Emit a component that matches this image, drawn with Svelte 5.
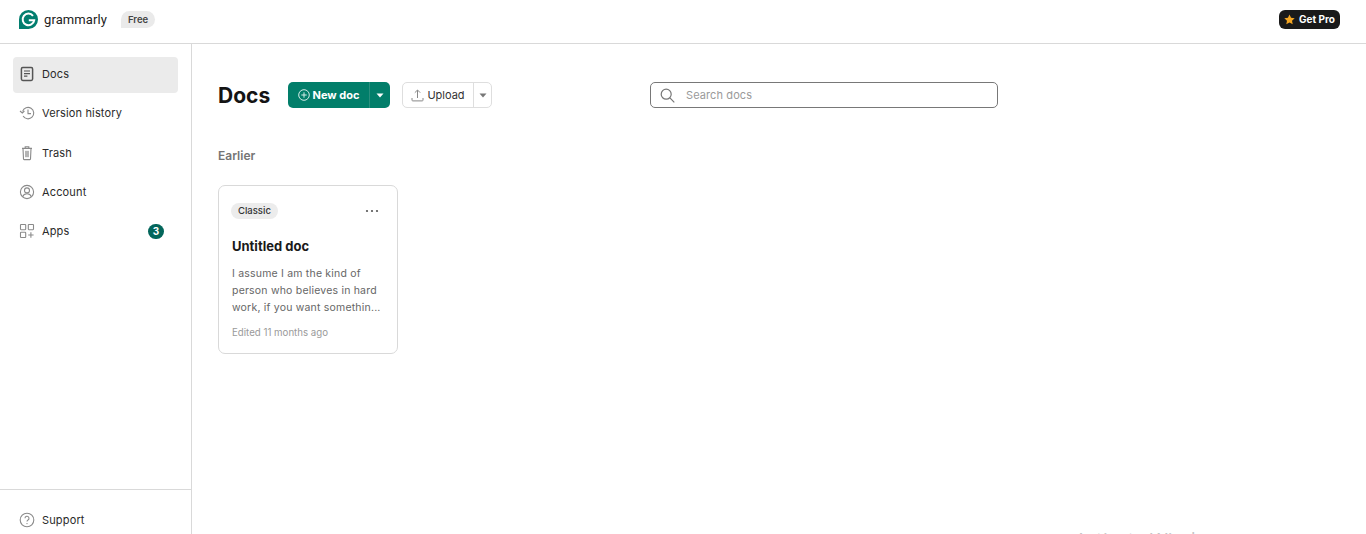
<script>
  const nav = [
    { id: 'docs', label: 'Docs', active: true },
    { id: 'history', label: 'Version history' },
    { id: 'trash', label: 'Trash' },
    { id: 'account', label: 'Account' },
    { id: 'apps', label: 'Apps', badge: 3 }
  ];
</script>

{#snippet caret()}
  <svg width="8" height="5" viewBox="0 0 8 5"><path d="M0.5 0.5h7L4 4.500z" fill="currentColor" /></svg>
{/snippet}

{#snippet navIcon(id)}
  <svg class="nav-icon" width="16" height="16" viewBox="0 0 16 16" fill="none" stroke="#8a8a8a" stroke-width="1.100">
    {#if id === 'docs'}
      <rect x="2.400" y="1.600" width="11.200" height="12.800" rx="1.400" stroke="#555" stroke-width="1.500" />
      <path d="M5 5h6M5 7.600h6M5 10.200h3.400" stroke="#555" stroke-width="1.200" />
    {:else if id === 'history'}
      <path d="M3.600 6.400a5.700 5.700 0 1 1 .5 4.600" />
      <path d="M1 6l2.300 2 2.100-2" />
      <path d="M9 4.400v4.200h3" />
    {:else if id === 'trash'}
      <path d="M3 3.400h10M6.200 3.200V1.800h3.600v1.400M4 3.600l.5 10.400c0 .4.300.6.600.6h5.800c.3 0 .6-.2.6-.6l.5-10.400" />
      <path d="M6 5.800h4v6.400H6z" fill="#b5b5b5" stroke="none" />
    {:else if id === 'account'}
      <circle cx="8" cy="8" r="6.600" />
      <circle cx="8" cy="6.400" r="2.500" />
      <path d="M3.600 12.800c.7-2 2.400-3 4.400-3s3.700 1 4.400 3" />
    {:else if id === 'apps'}
      <rect x="1.500" y="1.500" width="5.200" height="5.200" rx=".6" />
      <rect x="9.300" y="1.500" width="5.200" height="5.200" rx=".6" />
      <rect x="1.500" y="9.300" width="5.200" height="5.200" rx=".6" />
      <path d="M11.900 9.300v5.400M9.200 12h5.400" />
    {:else}
      <circle cx="8" cy="8" r="6.800" />
      <path d="M6 6.300a2 2 0 1 1 3 1.700c-.7.400-1 .8-1 1.600" />
      <circle cx="8" cy="11.600" r=".7" fill="#8a8a8a" stroke="none" />
    {/if}
  </svg>
{/snippet}

<div class="page">
  <header class="topbar">
    <div class="brand">
      <svg width="19" height="19" viewBox="0 0 19 19">
        <path d="M9.500 0a9.500 9.500 0 0 1 9.500 9.500A9.500 9.500 0 0 1 9.500 19H0V9.500A9.500 9.500 0 0 1 9.500 0z" fill="#027e6f" />
        <path d="M14 5.800a5.800 5.800 0 1 0 1.200 4.500H9.800" fill="none" stroke="#fff" stroke-width="2" />
      </svg>
      <span class="wordmark">grammarly</span>
      <span class="plan">Free</span>
    </div>
    <button class="get-pro">
      <svg width="11" height="11" viewBox="0 0 24 24"><path d="M12 1l3.400 7.300 7.900 1-5.800 5.400 1.500 7.900-7-3.900-7 3.900 1.500-7.900L.7 9.300l7.900-1z" fill="#f5a623" /></svg>
      Get Pro
    </button>
  </header>

  <div class="body">
    <aside class="sidebar">
      <nav>
        {#each nav as item}
          <div class="nav-item" class:active={item.active}>
            {@render navIcon(item.id)}
            <span>{item.label}</span>
            {#if item.badge}<span class="badge">{item.badge}</span>{/if}
          </div>
        {/each}
      </nav>
      <div class="support">
        <div class="nav-item">
          {@render navIcon('support')}
          <span>Support</span>
        </div>
      </div>
    </aside>

    <main class="content">
      <div class="toolbar">
        <h1>Docs</h1>
        <div class="split primary">
          <button class="main">
            <svg width="12" height="12" viewBox="0 0 12 12" fill="none" stroke="#d5ece8" stroke-width="1"><circle cx="6" cy="6" r="5.300" /><path d="M6 3.300v5.400M3.300 6h5.400" /></svg>
            New doc
          </button>
          <button class="arrow">{@render caret()}</button>
        </div>
        <div class="split secondary">
          <button class="main">
            <svg width="13" height="13" viewBox="0 0 13 13" fill="none" stroke="#888" stroke-width="1"><path d="M6.500 9V1.200M3.800 3.700l2.700-2.700 2.700 2.700M1 9v2.200c0 .4.300.7.700.7h9.600c.4 0 .7-.3.700-.7V9" /></svg>
            Upload
          </button>
          <button class="arrow">{@render caret()}</button>
        </div>
        <label class="search">
          <svg width="15" height="15" viewBox="0 0 15 15" fill="none" stroke="#777" stroke-width="1.200"><circle cx="6.200" cy="6.200" r="5" /><path d="M9.900 9.900l4.400 4.400" /></svg>
          <input type="text" placeholder="Search docs" />
        </label>
      </div>

      <h2>Earlier</h2>

      <article class="card">
        <div class="card-top">
          <span class="tag">Classic</span>
          <svg class="dots" width="14" height="4" viewBox="0 0 14 4" fill="#555"><circle cx="2" cy="2" r="1.100" /><circle cx="7" cy="2" r="1.100" /><circle cx="12" cy="2" r="1.100" /></svg>
        </div>
        <h3>Untitled doc</h3>
        <p class="preview">I assume I am the kind of person who believes in hard work, if you want somethin...</p>
        <p class="meta">Edited 11 months ago</p>
      </article>
    </main>
  </div>

  <div class="watermark">Activate Windows</div>
</div>

<style>
  :global(body) {
    margin: 0;
    background: #fff;
  }

  .page {
    position: relative;
    height: 534px;
    overflow: hidden;
    display: flex;
    flex-direction: column;
    font-family: Inter, "Liberation Sans", sans-serif;
    color: #1a1a1a;
  }

  button {
    font-family: inherit;
    border: none;
    background: none;
    padding: 0;
    cursor: pointer;
  }

  .topbar {
    height: 43px;
    flex: none;
    border-bottom: 1px solid #d9d9d9;
    display: flex;
    align-items: center;
    justify-content: space-between;
    padding: 0 26px 0 19px;
  }

  .brand {
    display: flex;
    align-items: center;
    margin-top: -4px;
  }

  .wordmark {
    margin-left: 6px;
    font-family: Roboto, sans-serif;
    font-size: 13px;
    letter-spacing: 0.1px;
    color: #222;
    width: 64px;
  }

  .plan {
    margin-left: 13px;
    height: 17px;
    line-height: 17px;
    padding: 0 7px;
    background: #eaeaea;
    border-radius: 9px 9px 9px 0;
    font-size: 9.500px;
    font-weight: 600;
    color: #444;
  }

  .get-pro {
    margin-top: -5px;
    height: 19px;
    width: 61px;
    border-radius: 6px;
    background: #1a1a1a;
    color: #fff;
    font-size: 10px;
    font-weight: 700;
    display: flex;
    align-items: center;
    justify-content: center;
    gap: 4px;
  }

  .body {
    flex: 1;
    display: flex;
    min-height: 0;
  }

  .sidebar {
    width: 192px;
    box-sizing: border-box;
    flex: none;
    border-right: 1px solid #d9d9d9;
    display: flex;
    flex-direction: column;
    justify-content: space-between;
  }

  nav {
    padding: 13px 13px 0;
    display: flex;
    flex-direction: column;
    gap: 3.250px;
  }

  nav .nav-item {
    padding-bottom: 2px;
  }

  .nav-item {
    height: 36px;
    box-sizing: border-box;
    border-radius: 4px;
    padding: 0 14px 0 6px;
    display: flex;
    align-items: center;
    gap: 7px;
    font-size: 11px;
    font-weight: 400;
    letter-spacing: 0.15px;
    color: #2a2a2a;
  }

  .nav-item.active {
    background: #ebebeb;
  }

  .nav-icon {
    flex: none;
  }

  .badge {
    margin-left: auto;
    width: 16px;
    height: 15px;
    border-radius: 8px;
    background: #03665b;
    color: #fff;
    font-size: 10px;
    font-weight: 700;
    display: flex;
    align-items: center;
    justify-content: center;
  }

  .support {
    border-top: 1px solid #d9d9d9;
    padding: 12px 13px 0;
    height: 32px;
  }

  .content {
    flex: 1;
    padding: 38px 0 0 26px;
  }

  .toolbar {
    display: flex;
    align-items: center;
    height: 26px;
  }

  h1 {
    margin: 0 18px 0 0;
    font-size: 21px;
    font-weight: 700;
    color: #141414;
    width: 52px;
  }

  .split {
    height: 26px;
    display: flex;
    border-radius: 5px;
    overflow: hidden;
    box-sizing: border-box;
  }

  .split .main,
  .split .arrow {
    height: 100%;
    display: flex;
    align-items: center;
    justify-content: center;
  }

  .primary {
    width: 102px;
    background: #027e6a;
    color: #fff;
    margin-right: 12px;
  }

  .primary .main {
    width: 82px;
    gap: 3px;
    color: #fff;
    font-size: 11px;
    font-weight: 700;
    border-right: 1px solid #2a8f7e;
    box-sizing: border-box;
  }

  .primary .arrow {
    width: 20px;
    color: #fff;
  }

  .secondary {
    width: 90px;
    border: 1px solid #dedede;
    margin-right: 158px;
  }

  .secondary .main {
    width: 71px;
    gap: 3px;
    color: #333;
    font-size: 11px;
    font-weight: 400;
    border-right: 1px solid #dedede;
    box-sizing: border-box;
  }

  .secondary .arrow {
    flex: 1;
    color: #777;
  }

  .search {
    width: 348px;
    height: 26px;
    box-sizing: border-box;
    border: 1px solid #787878;
    border-radius: 5px;
    display: flex;
    align-items: center;
    gap: 9px;
    padding-left: 9px;
  }

  .search input {
    border: none;
    outline: none;
    flex: 1;
    min-width: 0;
    font-family: inherit;
    font-size: 11px;
    letter-spacing: 0.1px;
    background: none;
  }

  .search input::placeholder {
    color: #9a9a9a;
  }

  h2 {
    margin: 40px 0 0;
    font-size: 12px;
    line-height: 15px;
    font-weight: 600;
    color: #757575;
  }

  .card {
    margin-top: 22px;
    width: 180px;
    height: 169px;
    box-sizing: border-box;
    border: 1px solid #d9d9d9;
    border-radius: 7px;
    padding: 17px 6px 0 12px;
  }

  .card-top {
    height: 16px;
    display: flex;
    align-items: center;
    justify-content: space-between;
  }

  .dots {
    margin-right: 12px;
  }

  .tag {
    height: 16px;
    line-height: 16px;
    padding: 0 7px;
    border-radius: 8px;
    background: #ececec;
    font-size: 9.500px;
    font-weight: 500;
    color: #333;
  }

  h3 {
    margin: 19px 0 0 1px;
    font-size: 13px;
    line-height: 16px;
    font-weight: 700;
    color: #1a1a1a;
  }

  .preview {
    margin: 11px 0 0 1px;
    width: 155px;
    font-size: 10.500px;
    line-height: 17px;
    letter-spacing: 0.2px;
    color: #666;
  }

  .meta {
    margin: 11px 0 0 1px;
    font-size: 9.700px;
    line-height: 12px;
    color: #9a9a9a;
  }

  .watermark {
    position: absolute;
    left: 1075px;
    top: 526px;
    font-family: "Open Sans", sans-serif;
    font-size: 19px;
    color: #c4c4c4;
    white-space: nowrap;
  }
</style>
